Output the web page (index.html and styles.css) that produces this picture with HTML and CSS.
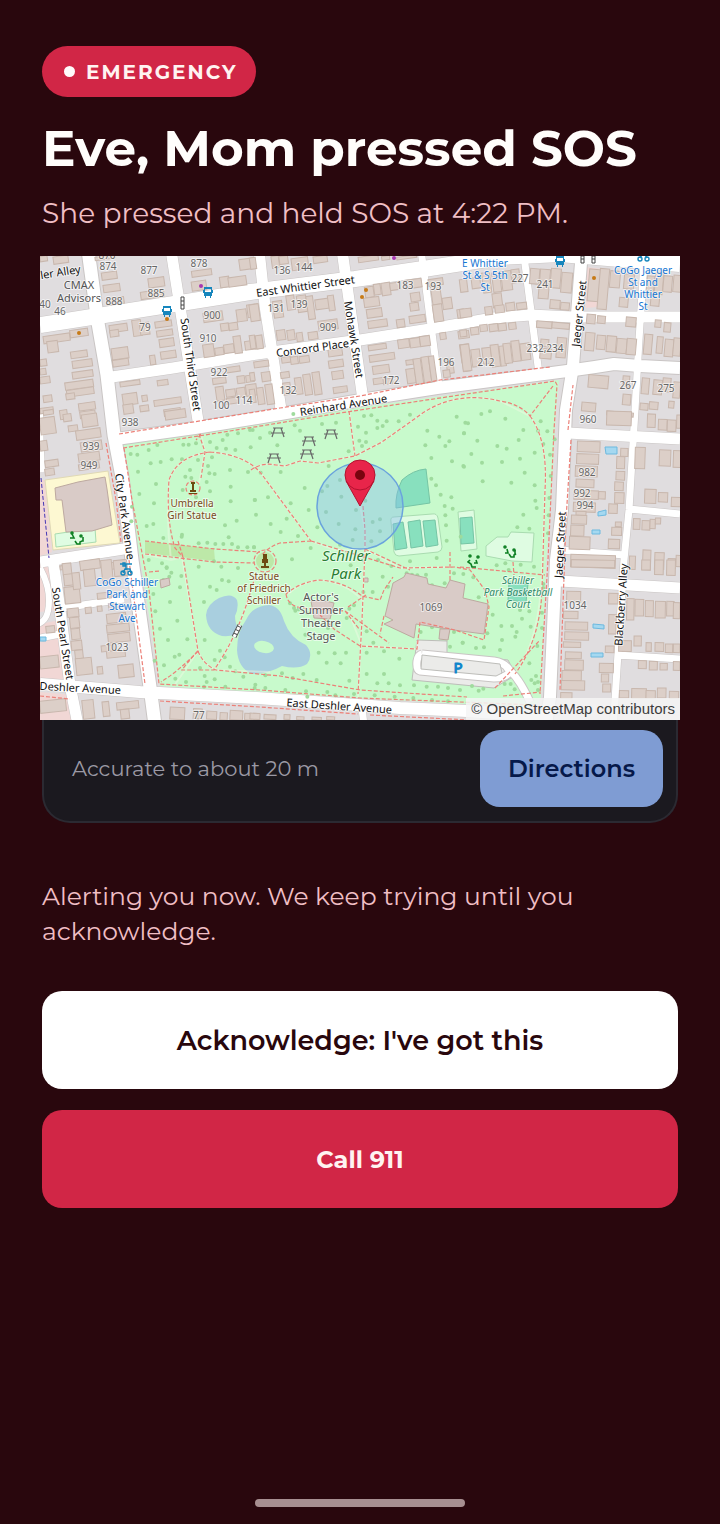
FILE: index.html
```html
<!DOCTYPE html>
<html lang="en">
<head>
<meta charset="utf-8">
<meta name="viewport" content="width=device-width, initial-scale=1">
<title>Emergency</title>
<link rel="stylesheet" href="styles.css">
</head>
<body>
<main class="screen">
  <header class="alert-head">
    <span class="badge"><span class="badge-dot"></span>EMERGENCY</span>
    <h1 class="title">Eve, Mom pressed SOS</h1>
    <p class="subtitle">She pressed and held SOS at 4:22 PM.</p>
  </header>

  <section class="location-card">
    <div class="map-frame">
      <svg class="map" viewBox="40 256 640 464" role="img" aria-label="Map of Schiller Park">
        <rect class="land" x="40" y="256" width="640" height="464"/>
        <path class="retail" d="M40 562L51 562L57 610L40 612ZM40 624L60 620L70 682L40 681ZM40 692L74 695L79 720H40ZM586 267L602 269L598 307L586 308ZM40 480L45 480L52 552L40 556Z"/>
        <path class="school" d="M45 480L108 471L120 543L53 550Z"/>
        <path class="pitch-light" d="M55 534L95 528L96 542L56 547Z"/>
        <path class="civic" d="M55 488L78 482L105 477L107 489L112 525L92 531L66 532L62 500L56 500Z"/>
        <path class="park" d="M122 445L340 410L559 380L556 410L553 470L546 565L541 698L535 707L466 704L250 692L160 686L142 570L132 510Z"/>

        <g class="casing">
          <path d="M40 325L130 311L250 292L355 279L430 268L500 257L560 254L620 259L680 264" stroke-width="17"/>
          <path d="M88 250L98 323L107 375L114 435L122 477L132 560L150 687L155 725" stroke-width="15"/>
          <path d="M105 378L173 368L257 354L360 340L430 329L493 318L530 315L573 317L680 317" stroke-width="12"/>
          <path d="M116 439L195 428L257 418L367 399L437 388L567 371L595 367L614 364L640 366L680 368" stroke-width="14"/>
          <path d="M582 250L573 366L566 410L562 510L556 560L550 697L546 725" stroke-width="14"/>
          <path d="M40 684L140 692L257 698L400 708L467 711L550 717" stroke-width="13"/>
          <path d="M171 250L199 427M259 250L265 306L282 416M342 250L363 400M40 562L130 548M53 560L60 610L70 685L78 725" stroke-width="12"/>
          <path d="M568 433L680 439M560 581L680 588" stroke-width="12"/>
          <path d="M421 250L439 386M524 256L539 374M644 262L639 340L635 410L629 510L624 560L615 700L613 725M629 509L680 514M560 550L625 555M62 608L124 599M617 655L680 659M40 638L60 634M362 708L364 725" stroke-width="8"/>
          <path d="M40 568Q52 590 48 611Q46 621 38 624M40 408Q40 440 42 472" stroke-width="7"/>
        </g>
        <g class="road">
          <path d="M40 325L130 311L250 292L355 279L430 268L500 257L560 254L620 259L680 264" stroke-width="16"/>
          <path d="M88 250L98 323L107 375L114 435L122 477L132 560L150 687L155 725" stroke-width="13"/>
          <path d="M105 378L173 368L257 354L360 340L430 329L493 318L530 315L573 317L680 317" stroke-width="11"/>
          <path d="M116 439L195 428L257 418L367 399L437 388L567 371L595 367L614 364L640 366L680 368" stroke-width="12"/>
          <path d="M582 250L573 366L566 410L562 510L556 560L550 697L546 725" stroke-width="12"/>
          <path d="M40 684L140 692L257 698L400 708L467 711L550 717" stroke-width="12"/>
          <path d="M171 250L199 427M259 250L265 306L282 416M342 250L363 400M40 562L130 548M53 560L60 610L70 685L78 725" stroke-width="11"/>
          <path d="M568 433L680 439M560 581L680 588" stroke-width="11"/>
          <path d="M421 250L439 386M524 256L539 374M644 262L639 340L635 410L629 510L624 560L615 700L613 725M629 509L680 514M560 550L625 555M62 608L124 599M617 655L680 659M40 638L60 634M362 708L364 725" stroke-width="7"/>
          <path d="M40 568Q52 590 48 611Q46 621 38 624M40 408Q40 440 42 472" stroke-width="6"/>
        </g>

        <path class="water" d="M206 615Q207 604 219 598Q232 592 237 600Q239 608 235 616Q235 625 240 631Q235 637 222 636Q207 632 206 615ZM237 650Q237 632 246 620Q252 606 269 605Q280 606 284 621Q290 638 306 645Q314 654 307 664Q298 670 282 666Q268 674 252 674Q238 668 237 650Z"/>
        <ellipse class="island" cx="264" cy="647" rx="10" ry="6" transform="rotate(12 264 647)"/>
        <path class="hedge" d="M145 541L214 549L215 561L145 553Z"/>
        <circle class="hedge" cx="265" cy="561" r="9"/>
        <path class="pitch-light" d="M394 517Q390 517 391 522L394 552Q395 556 399 556L438 552Q442 551 442 547L438 518Q437 513 432 514ZM458 512L474 510L477 549L461 551ZM486 546L497 537L508 537L511 532L534 533L532 562L512 561L486 556Z"/>
        <path class="pitch" d="M396 508Q395 494 402 480Q413 470 426 469L430 503ZM393 524L403 522L407 548L395 550ZM408 522L420 520L423 546L411 548ZM423 521L435 520L438 545L426 547ZM460 518L472 517L474 543L461 544ZM509 582L528 584L526 602L508 600Z"/>

        <path class="lot" d="M417 640L447 641L447 654L508 660L516 675L494 688L412 680Z"/>
        <path class="casing" d="M422 654L494 661Q506 663 510 671Q507 678 494 678L420 671Q416 670 417 661Q418 655 422 654M506 667Q519 677 530 702" stroke-width="9"/>
        <path class="road" d="M422 654L494 661Q506 663 510 671Q507 678 494 678L420 671Q416 670 417 661Q418 655 422 654M506 667Q519 677 530 702" stroke-width="7"/>
        <path class="lot" d="M422 655L500 664L502 673L496 676L421 669Z"/>

        <g id="trees" class="tree"></g>
        <g id="buildings" class="building"></g>

        <path class="civic" d="M393 583L404 577L406 573L427 578L428 584L446 588L450 580L465 584L463 598L488 604L484 634L461 631L441 628L416 624L414 638L384 624L393 620L385 616Z"/>
        <path class="civic" d="M311 601L321 600L334 603L330 619L314 618ZM160 580L169 578L170 585L161 588ZM364 578h4v4h-4ZM440 629L450 629L448 640L439 639Z"/>

        <g class="foot-casing">
          <path d="M171 560Q166 520 169 480Q177 456 210 452Q248 455 263 476L311 541M201 434L205 452L199 483M251 470Q262 462 276 465L285 466L300 461L318 463L355 456L382 442L420 415Q455 390 500 401L530 416M349 408L355 456M530 416Q548 440 545 490L542 570Q540 640 515 674M360 506L365 530L365 549L362 620L358 698M311 541L335 550L365 549M366 549L400 568L450 567M144 554L171 560L183 557M182 557L198 651L174 686M198 651Q203 664 216 670L270 672M215 669Q235 640 248 600L256 574M288 594Q300 582 320 580Q345 582 362 600M348 611L362 646L417 649L417 641"/>
        </g>
        <g class="foot">
          <path d="M119 434L280 408L360 396L440 380L550 367M106 443L116 500L121 542M129 560L145 684M568 430L573 385M571 440L566 520L560 690M40 696L70 699M160 701L260 707L358 714M370 715L470 720"/>
          <path d="M123 448L230 431L340 413L460 395L555 381L557 385L554 430L548 560L540 694M124 448L132 500L149 590L159 684L260 690L360 698L535 705"/>
          <path d="M201 434L196 440M199 434L205 452L201 478M210 452Q248 455 263 476L311 541M210 452Q177 456 169 480Q166 520 175 548L183 557L198 651Q180 670 161 682M251 470Q262 462 276 465L285 466L300 461L318 463L355 456L382 442L420 415Q455 390 500 401Q520 404 530 416L553 386M349 411L355 456M530 416Q548 440 545 490L542 590Q540 640 515 674M363 506L365 530L365 549L362 620L358 694"/>
          <path d="M311 541L280 543Q268 547 262 555M311 541L400 568L455 567L470 570L485 590L489 607L484 640L455 630L420 622L417 649L360 646L334 629M365 549L410 570M145 541L215 549L260 552M145 554L214 562L255 563M178 541L183 557M198 651Q203 664 216 670L280 676L360 690L467 697M198 651Q186 664 182 670L214 670Q235 640 248 600L256 574M286 594Q300 582 320 580Q345 582 362 596L380 600L384 590L393 577M286 594Q288 607 304 608L345 611L389 643M348 607L366 595M345 611L360 630M335 630L320 615M450 552L450 580M460 567L545 575M513 562L514 575M384 616L380 634"/>
          <circle cx="193" cy="488" r="7"/><circle cx="265" cy="561" r="11"/>
          <path d="M149 572L160 571M503 696L541 692M495 688L540 640"/>
        </g>
        <path class="bus-line" d="M41 478L49 558"/>
        <path class="footbridge" d="M234 637L240 625"/><path class="footbridge-deck" d="M234 637L240 625"/>
        <path class="pool" d="M605 447h12v7h-11zM598 512l8-2v5l-8 1zM592 530h8v4h-8zM593 624l11 1v4l-11-1zM591 653h12v4h-12zM40 637h6v4h-6z"/>

        <g class="poi-blue">
          <g transform="translate(162 306)"><path d="M1 0h8v9H8v2H7V9H3v2H2V9H1zM2 2v3h6V2zM0 3h1v3H0zM9 3h1v3H9z" fill-rule="evenodd"/></g>
          <g transform="translate(203 287)"><path d="M1 0h8v9H8v2H7V9H3v2H2V9H1zM2 2v3h6V2zM0 3h1v3H0zM9 3h1v3H9z" fill-rule="evenodd"/></g>
          <g transform="translate(555 256)"><path d="M1 0h8v9H8v2H7V9H3v2H2V9H1zM2 2v3h6V2zM0 3h1v3H0zM9 3h1v3H9z" fill-rule="evenodd"/></g>
          <path class="bike" d="M120 564h12M123 563h2v3h-2zM126 564v6M121 573a2 2 0 1 0 4 0a2 2 0 1 0 -4 0M128 573a2 2 0 1 0 4 0a2 2 0 1 0 -4 0M123 573l2-4h5l1 4M638 259a2 2 0 1 0 4 0a2 2 0 1 0 -4 0M645 259a2 2 0 1 0 4 0a2 2 0 1 0 -4 0M640 258l2-3h3l2 3"/>
        </g>
        <g class="signal">
          <path d="M181 297h3v12h-3zM181 301h3M181 305h3M581 256h3v7h-3zM592 256h3v7h-3zM581 259h3M592 259h3"/>
        </g>
        <g class="dot-amber"><circle cx="79" cy="333" r="2"/><circle cx="167" cy="319" r="2"/><circle cx="366" cy="290" r="2"/><circle cx="362" cy="297" r="2"/><circle cx="594" cy="278" r="2"/></g>
        <g class="dot-purple"><circle cx="201" cy="286" r="2"/><circle cx="394" cy="258" r="2"/></g>
        <g class="picnic">
          <path d="M273 428h10M271 433h14M275 428l-3 9M281 428l3 9M304 437h10M302 441h14M306 437l-3 9M312 437l3 9M326 430h10M324 434h14M328 430l-3 9M334 430l3 9M302 450h10M300 454h14M304 450l-3 9M310 450l3 9M269 454h10M267 458h14M271 454l-3 9M277 454l3 9"/>
        </g>
        <g class="monument">
          <path d="M191 482h4v2h-1v6h2v2h-6v-2h2v-6h-1zM189 493h8v1h-8zM263 554h4v5h1v4h-2v3h3v2h-8v-2h3v-3h-2v-4h1z"/>
        </g>
        <g class="play">
          <path d="M72 534l2 4h-4M75 541l2 3h3v-2l2-1h1v-4M507 549l1 4h-3M509 554l2 3h3v-2l2-1h-1v-4M476 560l1 3h-3M470 560l-2 2l3 2l1 3h4"/>
          <circle cx="72" cy="533" r="1"/><circle cx="81" cy="536" r="1"/><circle cx="505" cy="547" r="1"/><circle cx="514" cy="550" r="1"/><circle cx="470" cy="556" r="1"/><circle cx="478" cy="557" r="1"/>
        </g>

        <g class="house-no">
          <text x="107" y="259">870</text><text x="108" y="270">874</text><text x="149" y="274">877</text><text x="199" y="267">878</text><text x="114" y="305">888</text><text x="156" y="297">885</text><text x="45" y="308">40</text><text x="60" y="315">46</text><text x="145" y="331">79</text><text x="212" y="319">900</text><text x="208" y="342">910</text><text x="219" y="376">922</text><text x="221" y="409">100</text><text x="244" y="404">114</text><text x="282" y="274">136</text><text x="304" y="271">144</text><text x="276" y="312">131</text><text x="299" y="308">139</text><text x="328" y="331">909</text><text x="288" y="394">132</text><text x="391" y="384">172</text><text x="405" y="289">183</text><text x="433" y="290">193</text><text x="446" y="366">196</text><text x="486" y="366">212</text><text x="520" y="282">227</text><text x="545" y="288">241</text><text x="545" y="352">232,234</text><text x="628" y="389">267</text><text x="666" y="392">275</text><text x="588" y="423">960</text><text x="587" y="476">982</text><text x="582" y="497">992</text><text x="585" y="509">994</text><text x="575" y="609">1034</text><text x="130" y="426">938</text><text x="91" y="450">939</text><text x="89" y="469">949</text><text x="117" y="651">1023</text><text x="431" y="611">1069</text><text x="199" y="719">77</text>
        </g>
        <g class="street">
          <text transform="translate(61 276) rotate(-9)">ler Alley</text>
          <text transform="translate(306 290) rotate(-8)">East Whittier Street</text>
          <text transform="translate(313 352) rotate(-8)">Concord Place</text>
          <text transform="translate(344 409) rotate(-9)">Reinhard Avenue</text>
          <text transform="translate(187 365) rotate(82)">South Third Street</text>
          <text transform="translate(350 340) rotate(81)">Mohawk Street</text>
          <text transform="translate(583 314) rotate(-84)">Jaeger Street</text>
          <text transform="translate(564 545) rotate(-87)">Jaeger Street</text>
          <text transform="translate(625 605) rotate(-86)">Blackberry Alley</text>
          <text transform="translate(121 517) rotate(82)">City Park Avenue</text>
          <text transform="translate(59 634) rotate(81)">South Pearl Street</text>
          <text transform="translate(80 692) rotate(3)">Deshler Avenue</text>
          <text transform="translate(339 710) rotate(4)">East Deshler Avenue</text>
        </g>
        <g class="label-office">
          <text x="79" y="289">CMAX</text><text x="79" y="302">Advisors</text>
          <text x="321" y="601">Actor's</text><text x="321" y="614">Summer</text><text x="321" y="627">Theatre</text><text x="321" y="640">Stage</text>
        </g>
        <g class="label-blue">
          <text x="485" y="267">E Whittier</text><text x="485" y="279">St &amp; S 5th</text><text x="485" y="291">St</text>
          <text x="643" y="274">CoGo Jaeger</text><text x="643" y="286">St and</text><text x="643" y="298">Whittier</text><text x="643" y="310">St</text>
          <text x="127" y="586">CoGo Schiller</text><text x="127" y="598">Park and</text><text x="127" y="610">Stewart</text><text x="127" y="622">Ave</text>
        </g>
        <g class="label-brown">
          <text x="192" y="507">Umbrella</text><text x="192" y="519">Girl Statue</text>
          <text x="264" y="580">Statue</text><text x="264" y="592">of Friedrich</text><text x="264" y="604">Schiller</text>
        </g>
        <g class="label-court">
          <text x="518" y="584">Schiller</text><text x="518" y="596">Park Basketball</text><text x="518" y="608">Court</text>
        </g>
        <g class="label-park"><text x="346" y="561">Schiller</text><text x="346" y="579">Park</text></g>
        <text class="parking" x="458" y="673">P</text>

        <circle class="accuracy" cx="360" cy="506" r="43"/>
        <path class="pin" d="M346 481L360 506L374 481Z"/>
        <circle class="pin" cx="360" cy="475" r="15"/>
        <circle class="pin-hole" cx="360" cy="475" r="5"/>
      </svg>
      <span class="attribution">© OpenStreetMap contributors</span>
    </div>
    <div class="card-row">
      <span class="accuracy-text">Accurate to about 20 m</span>
      <button class="btn-directions" type="button">Directions</button>
    </div>
  </section>

  <p class="status">Alerting you now. We keep trying until you acknowledge.</p>

  <div class="actions">
    <button class="btn btn-ack" type="button">Acknowledge: I've got this</button>
    <button class="btn btn-call" type="button">Call 911</button>
  </div>

  <div class="home-bar"></div>
</main>
<script src="map.js"></script>
</body>
</html>
```

FILE: styles.css
```css
* { box-sizing: border-box; }

body {
  margin: 0;
  background: #29070d;
  color: #fffdfb;
  font-family: Montserrat, Inter, "Liberation Sans", sans-serif;
}

.screen {
  display: flex;
  flex-direction: column;
  min-height: 100vh;
  padding: 46px 42px 17px;
}

.alert-head {
  display: flex;
  flex-direction: column;
  align-items: flex-start;
}

.badge {
  display: inline-flex;
  align-items: center;
  gap: 11px;
  height: 51px;
  padding: 0 18px 0 22px;
  border-radius: 26px;
  background: #d12646;
  color: #fff3f1;
  font-size: 20px;
  font-weight: 700;
  letter-spacing: 2px;
}

.badge-dot {
  width: 11px;
  height: 11px;
  border-radius: 50%;
  background: #fffafa;
}

.title {
  margin: 20px 0 0;
  font-size: 50px;
  font-weight: 700;
  line-height: 64px;
  white-space: nowrap;
}

.subtitle {
  margin: 14px 0 0;
  color: #f0bec4;
  font-size: 28px;
  line-height: 36px;
}

.location-card {
  margin-top: 25px;
  border: 2px solid #2b2a32;
  border-top: 0;
  border-radius: 28px;
  background: #1b191f;
}

.map-frame {
  position: relative;
  margin: 0 -4px;
}

.map {
  display: block;
  width: 100%;
  height: auto;
}

.attribution {
  position: absolute;
  right: 0;
  bottom: 0;
  padding: 2px 5px 3px;
  background: rgba(245, 245, 245, 0.85);
  color: #3d3d3d;
  font: 15px/17px "Liberation Sans", Arial, sans-serif;
}

.card-row {
  display: flex;
  align-items: center;
  justify-content: space-between;
  padding: 10px 13px 14px 28px;
}

.accuracy-text {
  color: #9b99a5;
  font-size: 21px;
}

.btn-directions {
  height: 77px;
  padding: 0 28px;
  border: 0;
  border-radius: 20px;
  background: #7f9cd3;
  color: #06194a;
  font: inherit;
  font-size: 24px;
  font-weight: 600;
}

.status {
  margin: 56px 0 0;
  color: #f0bec4;
  font-size: 25px;
  line-height: 35px;
}

.actions {
  display: flex;
  flex-direction: column;
  gap: 21px;
  margin-top: 42px;
}

.btn {
  height: 98px;
  border: 0;
  border-radius: 20px;
  font: inherit;
  font-weight: 600;
}

.btn-ack {
  background: #fff;
  color: #29070d;
  font-size: 27px;
}

.btn-call {
  background: #d12646;
  color: #fff3f1;
  font-size: 24px;
  font-weight: 700;
}

.home-bar {
  align-self: center;
  width: 210px;
  height: 8px;
  margin-top: auto;
  border-radius: 4px;
  background: #a78f91;
}

/* Map */
.map text {
  font-family: "Noto Sans", sans-serif;
  text-anchor: middle;
  paint-order: stroke;
  stroke: rgba(255, 255, 255, 0.6);
  stroke-width: 2px;
  stroke-linejoin: round;
}
.land { fill: #e0dddf; }
.retail { fill: #f1d7d5; }
.school { fill: #fdf8d2; stroke: #e0d9b5; }
.park { fill: #c8facc; }
.hedge { fill: #bde8a8; }
.water { fill: #a9cfdf; }
.island { fill: #c8facc; }
.pitch-light { fill: #dffce2; stroke: #a9dcb0; stroke-width: 1; }
.pitch { fill: #88e0be; stroke: #76c5a5; stroke-width: 1; }
.lot { fill: #ebebe9; stroke: #bdbdb9; stroke-width: 1; }
.civic { fill: #d9cbc7; stroke: #bda9a0; stroke-width: 1; }
.casing, .road { fill: none; stroke-linejoin: round; }
.casing { stroke: #c9c5c4; }
.road { stroke: #fff; }
.tree { fill: #9fdb9d; }
.building rect { fill: #dccfc8; stroke: #c8b7ad; stroke-width: 1; }
.foot-casing, .foot { fill: none; }
.foot-casing { stroke: rgba(235, 250, 225, 0.5); stroke-width: 2; }
.foot { stroke: #ec8078; stroke-width: 1.2; stroke-dasharray: 4 2; }
.bus-line { fill: none; stroke: #4536b5; stroke-width: 1; stroke-dasharray: 4 2; }
.footbridge { stroke: #555; stroke-width: 5; }
.footbridge-deck { stroke: #fff; stroke-width: 3; stroke-dasharray: 3 1; }
.pool { fill: #a5d8f0; stroke: #6db9df; stroke-width: 1; }
.poi-blue { fill: #1686bd; }
.bike { fill: none; stroke: #1686bd; stroke-width: 1.4; }
.signal { fill: #fff; stroke: #444; stroke-width: 1; }
.dot-amber { fill: #c77a16; }
.dot-purple { fill: #a938b0; }
.picnic { fill: none; stroke: #666; stroke-width: 1.2; }
.monument { fill: #6c4a10; }
.play { fill: none; stroke: #0d7f22; stroke-width: 1.6; }
.house-no { fill: #666; font-size: 10px; }
.street { fill: #111; font-size: 11px; }
.label-office { fill: #555; font-size: 11px; }
.label-blue { fill: #1676d2; font-size: 10px; }
.label-brown { fill: #7a4b22; font-size: 10px; }
.label-court { fill: #2f8b68; font-size: 10px; font-style: italic; }
.label-park { fill: #2a7d33; font-size: 15px; font-style: italic; }
.map .parking { fill: #0d86cc; stroke: #0d86cc; stroke-width: 1px; font-size: 15px; }
.accuracy { fill: rgba(130, 185, 240, 0.4); stroke: #6aa3dd; stroke-width: 1.5; }
.pin { fill: #e8254a; stroke: #b3122f; stroke-width: 1; }
.pin-hole { fill: #78040f; }
```

FILE: map.js
```js
// Map features by sheet. Each sheet has an origin and is drawn at 3 units per pixel.
// Buildings are "x y width height", trees are "x y".
const sheets = [
  { x: 40, y: 256, angle: -8,
    buildings: "40 0 45 22,0 0 22 16,165 0 60 10,185 48 46 22,190 85 50 22,200 125 52 20,325 65 48 28,302 104 70 22,455 42 60 18,455 75 44 28,540 62 28 32,565 62 54 28,598 8 46 32,490 168 58 28,590 160 30 36,622 145 34 38,542 202 24 22,567 200 26 22,10 236 80 22,22 255 32 34,90 220 54 22,208 205 54 22,210 222 26 20,278 192 26 48,300 200 28 36,345 195 50 18,350 222 48 18,358 248 44 24,362 285 46 22,330 298 16 28,215 275 50 34,218 310 48 20,92 285 50 20,97 312 60 22,97 345 62 20,75 375 85 22,80 398 82 20,78 412 26 18,116 440 50 22,120 465 46 20,0 310 20 20,0 338 18 18,0 362 30 20,10 418 26 20,0 455 40 16,490 265 32 38,525 275 26 22,552 265 30 26,582 240 22 52,615 255 28 26,643 240 22 38,240 375 60 14,352 372 32 16,248 412 44 34,250 445 30 28,306 418 16 18,300 448 26 18,342 428 82 18,372 458 50 20,518 365 40 18,560 332 40 16,592 360 22 22,618 358 24 20,528 392 24 42,558 400 28 22,590 395 26 28,618 385 32 34,560 425 34 18" },
  { x: 250, y: 256, angle: -8,
    buildings: "0 5 18 34,65 0 22 36,88 0 26 24,125 5 50 36,190 0 42 20,325 0 60 16,395 0 24 12,440 0 60 8,0 145 28 50,0 238 16 40,18 238 20 40,70 135 28 50,110 118 24 44,142 118 28 50,172 120 20 70,196 128 56 30,235 118 18 46,205 192 58 30,80 222 26 30,112 222 22 30,140 230 18 26,175 228 28 22,345 92 26 32,372 84 20 32,395 80 26 38,420 80 30 22,465 70 50 26,342 124 46 28,350 158 46 26,354 192 58 22,482 110 28 26,480 140 26 24,478 178 48 22,440 190 24 24,535 68 44 20,545 90 28 55,550 145 28 52,578 125 28 34,622 160 20 26,640 160 20 22,95 302 28 18,122 302 22 22,148 300 30 20,92 348 26 18,100 380 22 36,136 365 20 50,162 355 22 62,190 348 22 68,235 280 42 20,236 312 44 22,246 345 34 24,250 392 42 18,12 315 44 18,0 350 14 24,35 348 26 28,0 400 16 40,22 395 20 50,48 385 22 60,355 265 54 16,358 294 76 20,368 328 50 24,370 366 34 18,400 368 28 16,444 250 34 26,480 246 30 28,510 240 30 30,468 312 22 14,470 338 26 44,494 308 22 76,518 302 22 78,540 300 16 76,570 230 18 20,625 225 32 22,632 265 26 54,590 308 20 44,580 342 20 22,640 328 20 18" },
  { x: 460, y: 256, angle: -7,
    buildings: "0 70 22 38,35 65 26 32,68 50 24 60,98 50 24 58,125 45 30 58,155 40 24 40,98 112 28 42,75 152 22 24,105 148 28 22,138 140 26 24,170 140 30 20,0 158 34 26,0 222 20 20,32 214 24 22,60 206 22 20,88 204 26 22,115 202 24 22,146 200 22 20,5 265 26 80,35 280 26 52,68 275 26 48,94 266 24 66,120 270 16 60,132 262 22 60,156 254 24 62,182 262 28 50" },
  { x: 460, y: 256, angle: 5,
    buildings: "210 38 28 46,238 40 30 88,272 38 30 58,304 50 32 60,270 132 30 26,302 140 26 22,385 40 34 96,416 38 28 122,450 45 30 50,492 55 30 44,478 125 26 28,560 60 22 55,585 50 24 65,610 60 26 48,640 58 24 50,572 120 26 30,230 196 46 20,276 200 52 18,242 250 24 22,240 278 34 30,290 245 28 60,380 175 26 28,412 180 24 22,498 184 30 28,585 192 18 22,612 200 20 28,375 230 28 54,410 238 26 42,440 240 28 48,470 248 30 44,500 248 28 48,552 235 24 60,590 242 18 50,614 250 26 52,640 246 22 54,385 358 60 38,365 440 42 26,488 360 20 38,488 415 24 32,545 366 22 48,580 372 26 44,608 366 24 42,640 378 20 48,540 442 24 20,568 438 26 22,626 436 16 20,440 468 80 12" },
  { x: 40, y: 410, angle: -8,
    buildings: "60 0 22 28,10 0 30 14,0 22 46 50,0 92 22 30,70 12 24 22,85 46 28 18,126 12 46 38,108 58 74 28,15 150 40 20,15 176 28 20,122 94 64 28,115 128 64 26,116 160 62 18,375 0 62 26,120 450 60 28,60 466 30 12,198 458 32 20" },
  { x: 460, y: 410, angle: 2,
    buildings: "440 4 74 42,562 12 24 40,595 28 26 32,622 30 26 34,650 15 14 40,352 94 68 32,350 132 66 30,346 168 66 32,348 208 54 24,342 240 32 28,375 242 40 26,416 245 20 22,340 278 66 28,348 304 30 12,334 316 46 26,332 346 40 32,328 380 62 38,482 115 22 24,470 140 24 36,468 184 26 26,464 216 26 26,464 248 28 32,446 282 26 28,466 336 18 14,455 352 30 24,445 388 34 28,525 112 30 64,598 120 34 48,640 122 22 50,554 238 34 42,595 248 28 28,634 262 28 28,520 326 20 32,546 332 24 28,570 328 16 28,586 324 16 18,548 420 24 60,584 428 28 50,624 446 22 30,648 436 16 34,508 438 18 40,332 435 134 38" },
  { x: 40, y: 560, angle: -6,
    buildings: "68 10 26 34,72 42 32 34,74 80 46 50,98 38 22 50,132 28 34 50,185 0 32 68,222 0 40 48,172 98 42 18,82 145 34 26,90 172 28 32,94 206 26 32,94 242 32 28,105 270 24 26,108 294 48 50,136 142 18 18,172 138 14 16,206 130 24 20,200 160 58 28,200 192 68 24,204 220 66 26,184 256 38 18,200 272 56 20,235 314 46 38,172 320 16 22,0 288 56 36,0 420 78 36,18 198 26 20,128 420 34 56,188 425 20 44,230 425 66 22,242 448 26 28" },
  { x: 40, y: 560, angle: 3,
    buildings: "390 442 44 36,460 446 26 30,500 454 30 24,540 458 22 22,570 452 38 28,614 460 20 20,640 460 18 20" },
  { x: 250, y: 560, angle: 3,
    buildings: "0 460 30 18,42 464 36 14,102 464 18 14,140 470 22 10,186 472 28 8,230 470 24 10" },
  { x: 460, y: 560, angle: 1,
    buildings: "334 0 130 22,320 94 42 32,310 154 44 22,315 186 68 24,314 216 72 24,310 246 52 16,316 276 48 20,314 300 56 30,306 332 58 30,304 362 70 28,302 398 34 18,446 100 28 32,446 164 22 58,436 258 26 20,418 310 42 28,424 342 22 24,428 372 24 24,476 242 38 32,522 228 22 30,558 248 16 26,585 248 26 26,616 252 22 26,640 252 20 26,500 116 22 64,525 118 26 50,556 122 24 48,586 124 30 50,620 124 22 44,640 128 20 48,545 0 26 30,584 0 26 44,620 0 26 46,535 302 24 24,568 304 24 26,600 310 22 20,640 305 20 26,515 386 44 30,558 392 28 24,592 384 26 30,628 394 28 22,478 392 28 22" },
  { x: 40, y: 410, trees: "272 132,292 134,326 120,352 105,430 104,446 104,468 100,510 96,548 90,562 74,594 70,638 60,395 148,426 148,332 160,362 156,294 185,348 222,298 252,342 280,276 290,274 334,320 348,340 342,370 384,426 374,474 150,516 142,504 168,450 180,508 190,524 192,436 200,454 204,428 240,510 244,468 262,500 216,530 114,558 116,586 120,632 112,570 180,624 186,572 274,572 230,645 270,480 320,476 400,502 398,526 402,550 402,576 402,594 412,622 412,642 412,555 346,590 332,326 450,380 472,476 470,522 454,544 470,594 474,566 382,425 380,380" },
  { x: 250, y: 410, trees: "0 60,30 84,82 106,60 68,134 46,150 62,130 12,216 42,258 38,296 124,324 50,348 68,382 32,410 34,382 54,398 48,342 18,364 16,328 92,348 96,336 108,446 34,480 14,532 62,526 106,544 144,568 80,598 94,620 20,646 38,642 70,606 154,640 168,586 108,32 188,92 186,14 270,54 262,18 314,62 342,92 366,110 326,122 280,144 378,164 234,176 300,202 352,236 168,270 210,216 244,274 260,232 228,228 306,266 342,316 358,318 300,346 272,368 336,390 328,390 364,308 390,364 394,12 412,126 448,182 414,544 206,558 226,572 254,604 262,584 288,608 296,586 316,588 346,590 392,632 380,340 450,384 450,424 468,480 454,560 444,302 466,270 404" },
  { x: 460, y: 410, trees: "24 40,64 12,90 4,136 26,12 70,52 92,112 108,140 116,176 90,34 132,66 158,12 170,126 156,180 146,68 214,154 218,194 188,224 226,224 128,190 60,234 62,262 64,242 34,250 102,284 88,270 134,272 198,268 264,226 272,230 294,190 314,266 316,172 352,208 356,264 370,182 464,222 470,146 480" },
  { x: 40, y: 560, trees: "366 10,380 24,394 38,424 48,388 50,370 60,340 102,420 82,390 126,346 154,412 182,360 206,384 240,442 238,492 126,546 60,566 64,530 90,510 80,404 290,418 284,372 316,406 356,344 302,438 366,480 324,494 348,500 366,492 380,524 358,524 300,540 272,554 292,570 320,586 334,556 380,610 350,646 374,494 240" },
  { x: 250, y: 560, trees: "14 384,46 346,96 340,128 354,160 342,200 360,206 278,230 308,254 280,272 310,288 278,298 362,46 384,106 390,168 394,172 410,232 396,256 406,312 402,350 278,350 214,370 248,402 274,350 342,382 370,402 342,416 370,450 376,374 406,434 410,448 296,492 376,530 380,564 380,594 384,490 414,546 420,594 424,630 390,512 216,534 192,546 202,572 200,594 206,612 216,600 260,638 248,470 40,486 44,502 46,528 44,546 76,584 70,612 40,640 42,340 96,368 96,398 50,414 80,120 130,132 144,146 148,172 160,136 152,312 136,298 146,166 224,234 204,290 174" },
  { x: 460, y: 560, trees: "40 52,110 16,136 10,56 112,98 164,82 220,124 198,156 198,170 216,166 230,126 240,180 150,186 176,208 154,212 200,246 158,246 204,250 84,250 72,232 258,208 310,228 348,234 366,214 360,234 390,224 370,164 388,152 372,134 372,70 386,36 378,56 392,120 270,72 262,48 264,8 248" }
];

const NS = "http://www.w3.org/2000/svg";
const buildingLayer = document.getElementById("buildings");
const treeLayer = document.getElementById("trees");

function add(layer, name, attrs) {
  const el = document.createElementNS(NS, name);
  for (const key in attrs) el.setAttribute(key, attrs[key]);
  layer.appendChild(el);
}

for (const sheet of sheets) {
  const parse = list => (list || "").split(",").filter(Boolean).map(item => item.split(" ").map(Number));
  for (const [bx, by, bw, bh] of parse(sheet.buildings)) {
    const x = sheet.x + bx / 3, y = sheet.y + by / 3, w = bw / 3, h = bh / 3;
    add(buildingLayer, "rect", {
      x, y, width: w, height: h,
      transform: `rotate(${sheet.angle} ${x + w / 2} ${y + h / 2})`
    });
  }
  for (const [tx, ty] of parse(sheet.trees)) {
    add(treeLayer, "circle", { cx: sheet.x + tx / 3, cy: sheet.y + ty / 3, r: 2 });
  }
}
```
